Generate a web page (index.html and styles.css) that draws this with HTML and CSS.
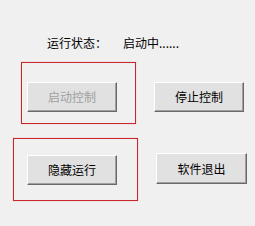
FILE: index.html
```html
<!DOCTYPE html>
<html lang="zh-CN">
<head>
<meta charset="utf-8">
<link rel="stylesheet" href="styles.css">
</head>
<body>
<div class="window">
  <div class="status">
    <span class="label">运行状态：</span>
    <span class="value">启动中......</span>
  </div>
  <div class="row row1">
    <div class="mark mark1"><button class="btn" disabled>启动控制</button></div>
    <button class="btn side1">停止控制</button>
  </div>
  <div class="row row2">
    <div class="mark mark2"><button class="btn">隐藏运行</button></div>
    <button class="btn side2">软件退出</button>
  </div>
</div>
</body>
</html>
```
FILE: styles.css
```css
html, body {
  margin: 0;
  padding: 0;
  background: #f0f0f0;
}
.window {
  width: 255px;
  height: 226px;
  background: #f0f0f0;
  font-family: "Noto Sans CJK SC", "Noto Sans", sans-serif;
  font-size: 12px;
  color: #000;
  box-sizing: border-box;
  padding-top: 35px;
}
.status {
  display: flex;
  height: 16px;
  line-height: 16px;
  padding-left: 47px;
  margin-bottom: 11px;
}
.label {
  width: 76px;
}
.row {
  display: flex;
  align-items: flex-start;
}
.row1 {
  padding-left: 21px;
}
.row2 {
  padding-left: 13px;
  margin-top: 14px;
}
.mark {
  border: 1px solid #c9262c;
  box-shadow: 0 0 1px rgba(230, 120, 120, 0.6);
  box-sizing: border-box;
}
.mark1 {
  width: 115px;
  height: 62px;
  padding: 19px 0 0 5px;
}
.mark2 {
  width: 125px;
  height: 63px;
  padding: 16px 0 0 13px;
}
.btn {
  width: 90px;
  height: 30px;
  box-sizing: border-box;
  padding: 0;
  margin: 0;
  background: #e1e1e1;
  border: 1px solid;
  border-color: #ffffff #696969 #696969 #ffffff;
  box-shadow: inset -1px -1px 0 #a0a0a0;
  font-family: "Noto Sans CJK SC", "Noto Sans", sans-serif;
  font-size: 12px;
  line-height: 16px;
  color: #000;
}
.btn:disabled {
  color: #a0a0a0;
}
.side1 {
  margin-left: 18px;
  margin-top: 20px;
}
.side2 {
  margin-left: 18px;
  margin-top: 15px;
  width: 91px;
  height: 31px;
}
```
